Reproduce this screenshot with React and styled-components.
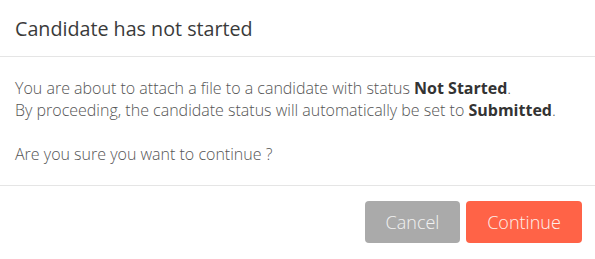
import React from 'react';
import styled, { createGlobalStyle } from 'styled-components';

const GlobalStyle = createGlobalStyle`
  html, body {
    margin: 0;
    padding: 0;
    background: #fff;
  }
  body {
    font-family: 'Open Sans', 'Noto Sans', sans-serif;
  }
`;

const Modal = styled.div`
  width: 595px;
  height: 259px;
  background: #fff;
  display: flex;
  flex-direction: column;
  box-sizing: border-box;
`;

const Header = styled.div`
  padding: 15px 15px;
  border-bottom: 1px solid #e5e5e5;
  height: 57px;
  box-sizing: border-box;
  display: flex;
  align-items: center;
`;

const Title = styled.h4`
  margin: 0;
  font-size: 19.7px;
  font-weight: 400;
  color: #3a3a3a;
  line-height: 27px;
`;

const Body = styled.div`
  padding: 20px 15px;
  font-size: 16px;
  font-weight: 300;
  line-height: 22px;
  color: #555;
  border-bottom: 1px solid #e5e5e5;

  p {
    margin: 0;
  }
  b {
    font-weight: 700;
    color: #333;
  }
`;

const Footer = styled.div`
  display: flex;
  justify-content: flex-end;
  gap: 6px;
  padding: 15px 13px 15px 15px;
`;

const Button = styled.button`
  height: 42px;
  width: ${(p) => (p.primary ? 116 : 95)}px;
  padding: 0;
  border: none;
  border-radius: 4px;
  font-family: inherit;
  font-size: 18px;
  font-weight: 300;
  color: ${(p) => (p.primary ? '#fdf0ec' : '#f2f2f2')};
  background: ${(p) => (p.primary ? '#ff6347' : '#aaaaaa')};
  cursor: pointer;
`;

export default function App() {
  return (
    <>
      <GlobalStyle />
      <Modal>
        <Header>
          <Title>Candidate has not started</Title>
        </Header>
        <Body>
          <p>
            You are about to attach a file to a candidate with status <b>Not Started</b>.
          </p>
          <p>
            By proceeding, the candidate status will automatically be set to <b>Submitted</b>.
          </p>
          <p>&nbsp;</p>
          <p>Are you sure you want to continue ?</p>
        </Body>
        <Footer>
          <Button>Cancel</Button>
          <Button primary>Continue</Button>
        </Footer>
      </Modal>
    </>
  );
}
